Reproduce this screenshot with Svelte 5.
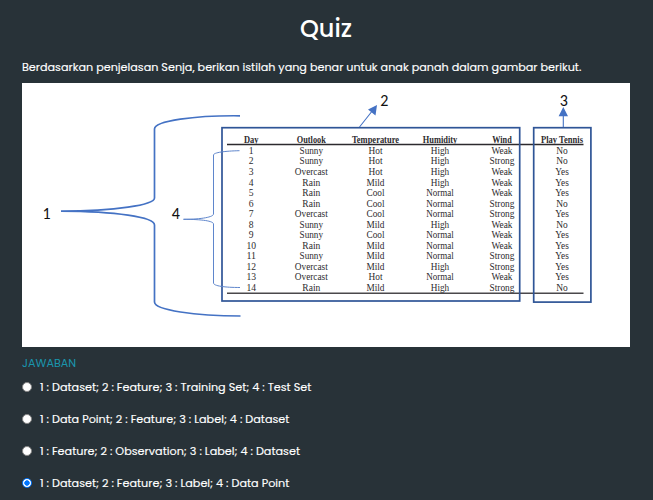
<script>
  const columns = [
    { label: 'Day', x: 251.2, w: 14.5 },
    { label: 'Outlook', x: 311.3, w: 29 },
    { label: 'Temperature', x: 375.5, w: 47 },
    { label: 'Humidity', x: 440, w: 34.5 },
    { label: 'Wind', x: 502, w: 19.5 },
    { label: 'Play Tennis', x: 562, w: 42 }
  ];

  const rows = [
    ['1', 'Sunny', 'Hot', 'High', 'Weak', 'No'],
    ['2', 'Sunny', 'Hot', 'High', 'Strong', 'No'],
    ['3', 'Overcast', 'Hot', 'High', 'Weak', 'Yes'],
    ['4', 'Rain', 'Mild', 'High', 'Weak', 'Yes'],
    ['5', 'Rain', 'Cool', 'Normal', 'Weak', 'Yes'],
    ['6', 'Rain', 'Cool', 'Normal', 'Strong', 'No'],
    ['7', 'Overcast', 'Cool', 'Normal', 'Strong', 'Yes'],
    ['8', 'Sunny', 'Mild', 'High', 'Weak', 'No'],
    ['9', 'Sunny', 'Cool', 'Normal', 'Weak', 'Yes'],
    ['10', 'Rain', 'Mild', 'Normal', 'Weak', 'Yes'],
    ['11', 'Sunny', 'Mild', 'Normal', 'Strong', 'Yes'],
    ['12', 'Overcast', 'Mild', 'High', 'Strong', 'Yes'],
    ['13', 'Overcast', 'Hot', 'Normal', 'Weak', 'Yes'],
    ['14', 'Rain', 'Mild', 'High', 'Strong', 'No']
  ];

  const wordWidth = {
    Sunny: 23.5, Overcast: 33, Rain: 18, Hot: 14, Mild: 18, Cool: 18,
    High: 18.5, Normal: 27.5, Weak: 21, Strong: 25, No: 11.5, Yes: 13.5
  };

  const options = [
    '1 : Dataset; 2 : Feature; 3 : Training Set; 4 : Test Set',
    '1 : Data Point; 2 : Feature; 3 : Label; 4 : Dataset',
    '1 : Feature; 2 : Observation; 3 : Label; 4 : Dataset',
    '1 : Dataset; 2 : Feature; 3 : Label; 4 : Data Point'
  ];

  let selected = $state(3);
</script>

<main>
  <h1>Quiz</h1>
  <p class="question">Berdasarkan penjelasan Senja, berikan istilah yang benar untuk anak panah dalam gambar berikut.</p>

  <svg class="figure" viewBox="22 83 608 264" width="608" height="264">
    <g class="table">
      {#each columns as c}
        <text class="head" x={c.x} y="142.6" textLength={c.w} lengthAdjust="spacingAndGlyphs">{c.label}</text>
      {/each}
      {#each rows as row, r}
        {#each row as cell, i}
          <text x={columns[i].x} y={153.9 + r * 10.54} textLength={wordWidth[cell] ?? cell.length * 4.8} lengthAdjust="spacingAndGlyphs">{cell}</text>
        {/each}
      {/each}
    </g>
    <path d="M227 144.6H583.5" stroke="#2c2a2e" stroke-width="1.5" />
    <path d="M227 293.3H583.5" stroke="#4a484b" stroke-width="1.6" />

    <g fill="none" stroke="#2f5597" stroke-width="1.7">
      <rect x="222" y="127.7" width="297.7" height="173.3" />
      <rect x="533.7" y="127.7" width="57.2" height="174.4" />
    </g>

    <g fill="none" stroke="#4472c4">
      <path stroke-width="1.7" d="M240 115.8C195 115.3 154.5 121 154.5 129V198C154.5 205 115 211 61 211.2C115 211.5 154.5 217 154.5 225V302C154.5 310 195 316 240.5 316" />
      <path stroke-width="1" stroke="#5f86cc" d="M239.5 150.7C225 151 213.5 152.5 213.5 155V214C213.5 217 202 219.3 183.5 219.3C202 219.3 213.5 221 213.5 224V283C213.5 286 225 287.5 240 287.5" />
      <path stroke-width="1.1" d="M359.5 127L373 110M563.3 127V114" />
    </g>
    <path fill="#4472c4" d="M377 105L375.5 115.5L368 109.5ZM563.3 107L568 116.3H558.6Z" />

    <g class="mark">
      <text x="46.5" y="218.8">1</text>
      <text x="175.7" y="218.8">4</text>
      <text x="384.3" y="106.2">2</text>
      <text x="563.8" y="106.2">3</text>
    </g>
  </svg>

  <h2>JAWABAN</h2>
  <div class="options">
    {#each options as text, i}
      <label>
        <input type="radio" name="answer" value={i} bind:group={selected} />
        <span>{text}</span>
      </label>
    {/each}
  </div>
</main>

<style>
  :global(body) { background: #283238; }
  main {
    box-sizing: border-box;
    height: 500px;
    padding: 10px 23px 0 22px;
    overflow: hidden;
    background: #283238;
    color: #fff;
    font-family: Poppins, Inter, sans-serif;
  }
  h1 {
    margin: 0;
    font-size: 24px;
    font-weight: 500;
    line-height: 38px;
    text-align: center;
  }
  .question {
    margin: 9px 0 6px;
    font-size: 11.2px;
    line-height: 20px;
    white-space: nowrap;
    -webkit-text-stroke: 0.15px #fff;
  }
  .figure { display: block; background: #fff; }
  .table text {
    font: 9.8px 'Liberation Serif', serif;
    fill: #2d2b2e;
    text-anchor: middle;
  }
  .table .head { font-weight: 700; font-size: 9.5px; }
  .mark text {
    font: 16px Carlito, Lato, sans-serif;
    fill: #111;
    text-anchor: middle;
  }
  h2 {
    margin: 7px 0 5px;
    font-size: 11.2px;
    font-weight: 400;
    line-height: 18px;
    color: #1a96ae;
  }
  .options { display: flex; flex-direction: column; gap: 12px; }
  label {
    display: flex;
    align-items: center;
    gap: 8px;
    height: 20px;
    font-size: 11.22px;
    white-space: nowrap;
    -webkit-text-stroke: 0.15px #fff;
  }
  input {
    appearance: none;
    box-sizing: border-box;
    width: 10px;
    height: 10px;
    margin: 0;
    border: 1px solid #858585;
    border-radius: 50%;
    background: #fff;
  }
  input:checked {
    border: 1.5px solid #0075ff;
    background: radial-gradient(circle, #0075ff 0 2.4px, #fff 3px);
  }
</style>
